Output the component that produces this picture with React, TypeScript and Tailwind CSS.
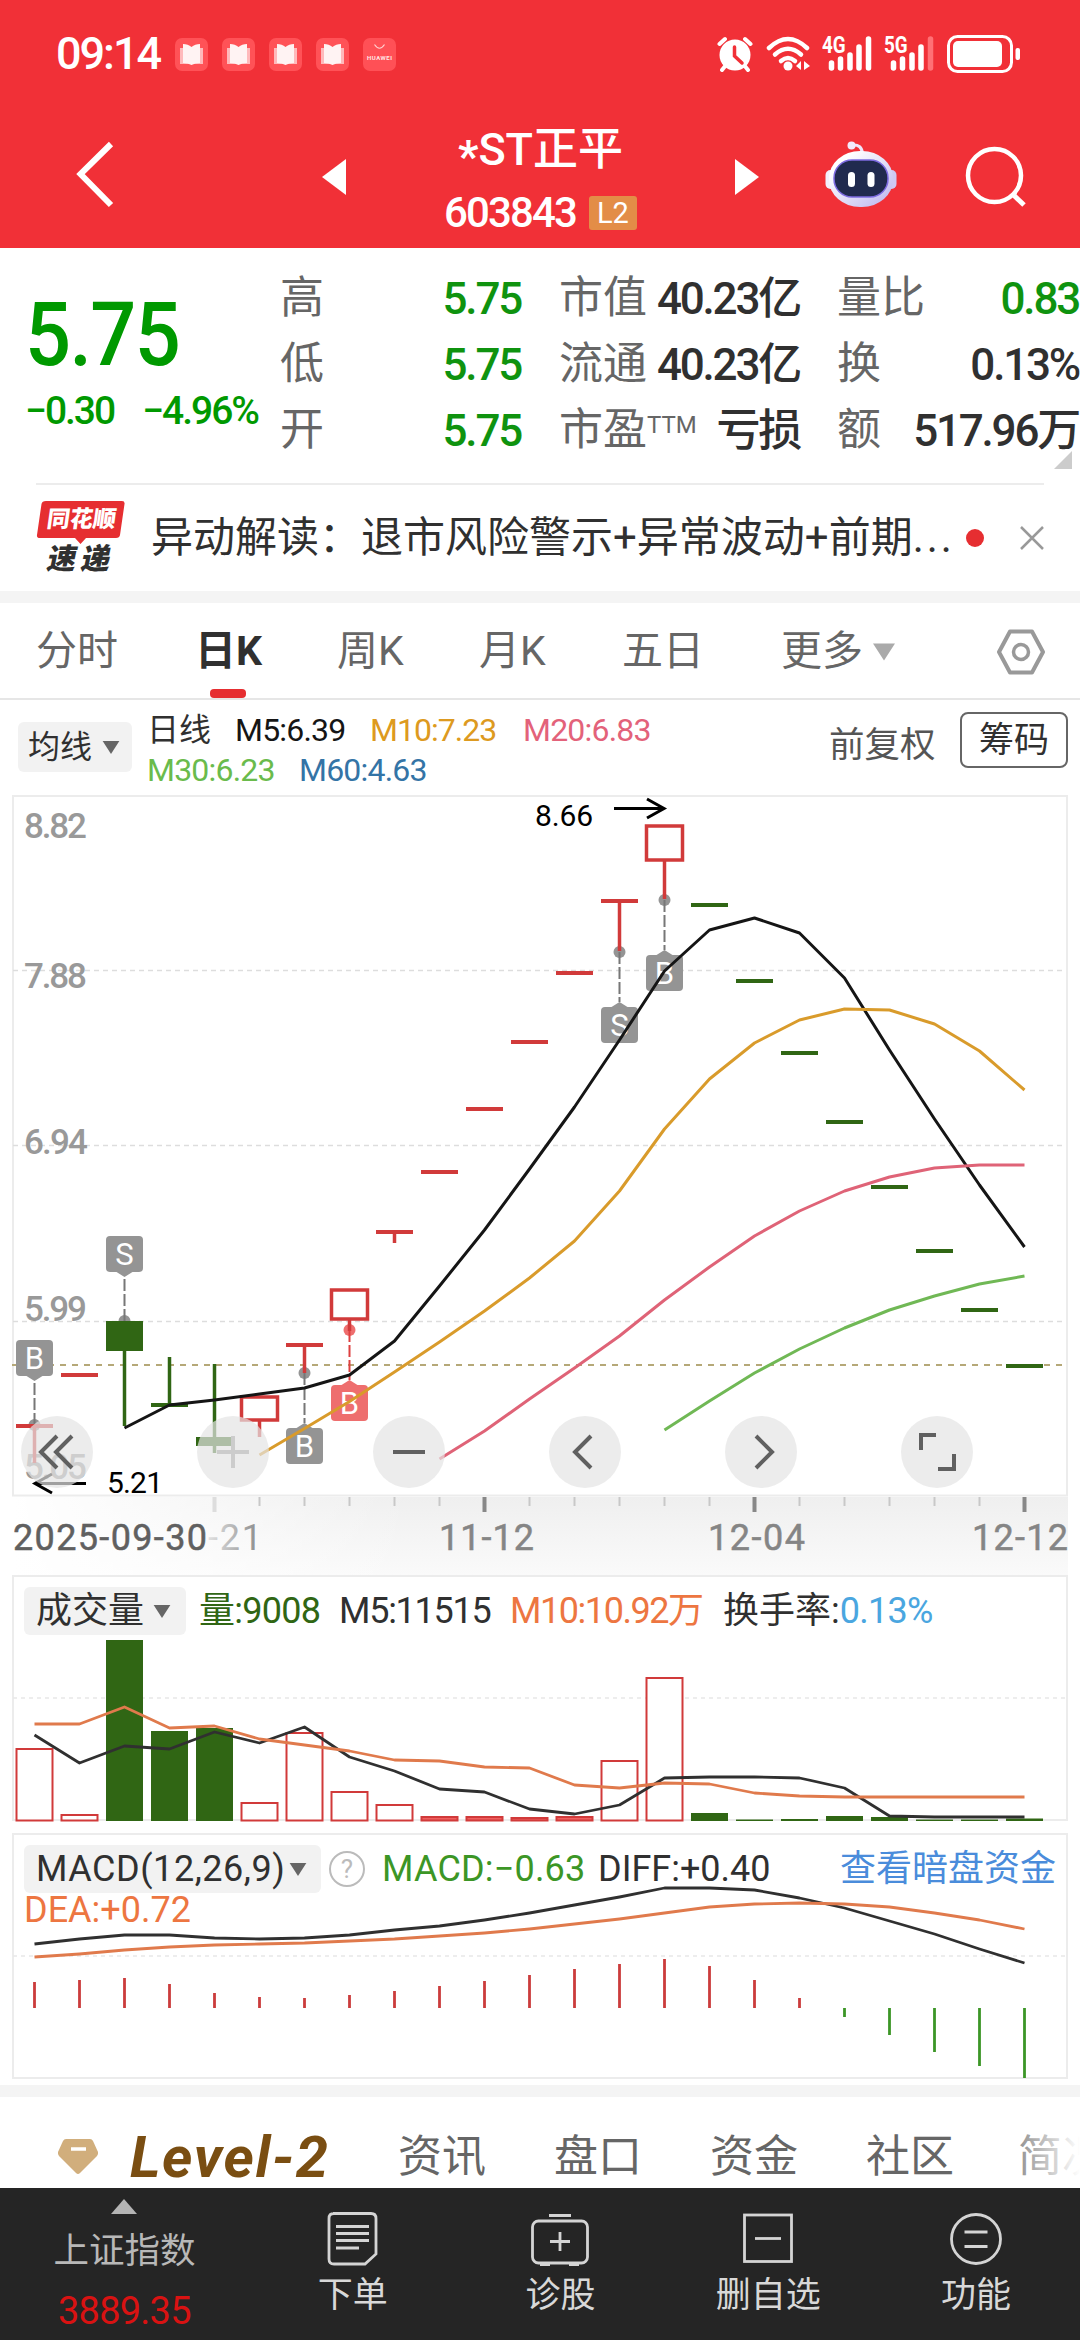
import type { ReactNode } from "react";

const STEP = 45;
const X0 = 34.5;
const cx = (i: number) => X0 + i * STEP;

const toPoints = (ys: number[], start = 0) =>
  ys.map((y, i) => `${cx(i + start)},${y}`).join(" ");

const RED = "#d13a3a";
const GREEN = "#306614";

type Candle = {
  kind: "up" | "down";
  top: number;
  bottom: number;
  wick?: [number, number];
};

// y values are already in chart pixels
const candles: Candle[] = [
  { kind: "up", top: 1425, bottom: 1425, wick: [1425, 1462] },
  { kind: "up", top: 1374, bottom: 1374 },
  { kind: "down", top: 1320, bottom: 1350, wick: [1350, 1425] },
  { kind: "down", top: 1404, bottom: 1404, wick: [1356, 1404] },
  { kind: "down", top: 1436, bottom: 1445, wick: [1363, 1452] },
  { kind: "up", top: 1396, bottom: 1419, wick: [1420, 1436] },
  { kind: "up", top: 1344, bottom: 1344, wick: [1344, 1372] },
  { kind: "up", top: 1289, bottom: 1318, wick: [1318, 1330] },
  { kind: "up", top: 1231, bottom: 1231, wick: [1231, 1242] },
  { kind: "up", top: 1171, bottom: 1171 },
  { kind: "up", top: 1108, bottom: 1108 },
  { kind: "up", top: 1041, bottom: 1041 },
  { kind: "up", top: 972, bottom: 972 },
  { kind: "up", top: 900, bottom: 900, wick: [900, 950] },
  { kind: "up", top: 825, bottom: 859, wick: [859, 898] },
  { kind: "down", top: 904, bottom: 904 },
  { kind: "down", top: 980, bottom: 980 },
  { kind: "down", top: 1052, bottom: 1052 },
  { kind: "down", top: 1121, bottom: 1121 },
  { kind: "down", top: 1186, bottom: 1186 },
  { kind: "down", top: 1250, bottom: 1250 },
  { kind: "down", top: 1309, bottom: 1309 },
  { kind: "down", top: 1365, bottom: 1365 },
];

const ma5 = [1427, 1404, 1399, 1393, 1387, 1374, 1340, 1285, 1229, 1168, 1106, 1039, 970, 929, 917, 932, 977, 1049, 1118, 1184, 1246];
const ma10 = [1454, 1427.5, 1400.5, 1371, 1341, 1310, 1277, 1240, 1190, 1128, 1078, 1042, 1019, 1008, 1009, 1023, 1050, 1089];
const ma20 = [1458, 1430, 1398, 1367, 1335, 1299, 1266, 1235, 1210, 1190, 1176, 1167, 1164, 1164];
const ma30 = [1429, 1400, 1372, 1348, 1327, 1309, 1295, 1283, 1275];

type Mark = { i: number; label: string; dot: number; box: number; color: string };

const marks: Mark[] = [
  { i: 0, label: "B", dot: 1424, box: 1339, color: "#949494" },
  { i: 2, label: "S", dot: 1320, box: 1235, color: "#949494" },
  { i: 6, label: "B", dot: 1372, box: 1427, color: "#949494" },
  { i: 7, label: "B", dot: 1329, box: 1384, color: "#ee6e6e" },
  { i: 13, label: "S", dot: 951, box: 1006, color: "#949494" },
  { i: 14, label: "B", dot: 899, box: 954, color: "#949494" },
];

const volumes = [
  { top: 1748, up: true }, { top: 1814, up: true }, { top: 1639, up: false },
  { top: 1730, up: false }, { top: 1727, up: false }, { top: 1802, up: true },
  { top: 1732, up: true }, { top: 1791, up: true }, { top: 1804, up: true },
  { top: 1816, up: true }, { top: 1816, up: true }, { top: 1817, up: true },
  { top: 1816, up: true }, { top: 1760, up: true }, { top: 1677, up: true },
  { top: 1812, up: false }, { top: 1818.5, up: false }, { top: 1818, up: false },
  { top: 1815, up: false }, { top: 1816, up: false }, { top: 1818.5, up: false },
  { top: 1818.5, up: false }, { top: 1817.5, up: false },
];
const vol5 = [1734, 1762, 1745, 1748, 1731, 1742, 1726, 1756, 1770, 1788, 1791, 1808, 1813, 1804, 1777, 1776, 1776, 1777, 1787, 1815, 1816, 1816, 1816];
const vol10 = [1723, 1723, 1706, 1727, 1725, 1738, 1744, 1750, 1759, 1760, 1766, 1767, 1784, 1787, 1782, 1783, 1792, 1795, 1796, 1796, 1796, 1796, 1796];

const macdBars = [1981, 1979, 1977, 1983, 1992, 1996, 1997, 1994, 1990, 1985, 1980, 1974, 1968, 1963, 1958, 1965, 1979, 1997, 2016, 2034, 2051, 2065, 2077];
const diff = [1943, 1938, 1934, 1934, 1937, 1938, 1937, 1934, 1929, 1925, 1919, 1912, 1904, 1896, 1887, 1887, 1889, 1897, 1907, 1920, 1933, 1948, 1962];
const dea = [1956, 1953, 1949, 1946, 1944, 1943, 1942, 1940, 1938, 1935, 1932, 1928, 1923, 1918, 1912, 1906, 1903, 1902, 1903, 1906, 1912, 1919, 1928];

function Caret({ className = "" }: { className?: string }) {
  return (
    <svg viewBox="0 0 18 14" className={`shrink-0 ${className}`}>
      <path d="M0 0H18L9 14Z" fill="currentColor" />
    </svg>
  );
}

function BookIcon() {
  return (
    <svg viewBox="0 0 33 33" className="h-[33px] w-[33px]">
      <rect width="33" height="33" rx="7" fill="#ff5257" />
      <path d="M5 10H28V26H5Z" fill="#ffb9bb" />
      <path d="M8 6Q13 6 16.500 9Q20 6 25 6V25Q20 25 16.500 27Q13 25 8 25Z" fill="#fff3f3" />
    </svg>
  );
}

function Signal({ label, last }: { label: string; last: string }) {
  return (
    <div className="relative h-[38px] w-[52px]">
      <svg viewBox="0 0 52 38" className="h-[38px] w-[52px]">
        <g stroke="#fff" strokeWidth="5.500" strokeLinecap="round">
          <path d="M9.500 28V33M18.500 24V33M28 20V33M37 12V33" />
          <path d="M46.500 4V33" stroke={last} />
        </g>
      </svg>
      <span className="absolute -top-[2px] left-0 origin-left scale-x-[.82] text-[23px] leading-[26px] font-bold">
        {label}
      </span>
    </div>
  );
}

function StatusBar() {
  return (
    <div className="flex h-[108px] items-center">
      <span className="ml-[56px] w-[119px] text-[45px] font-medium tracking-[-0.045em]">09:14</span>
      <div className="flex gap-[14px]">
        <BookIcon />
        <BookIcon />
        <BookIcon />
        <BookIcon />
        <svg viewBox="0 0 33 33" className="h-[33px] w-[33px]">
          <rect width="33" height="33" rx="7" fill="#ff5056" />
          <path d="M11.500 6.500Q16.500 14 21.500 6.500" fill="none" stroke="#ffd0d0" strokeWidth="1.200" />
          <text x="4" y="21.500" fontSize="6" fontWeight="700" textLength="25" fill="#ffe5e5">HUAWEI</text>
        </svg>
      </div>
      <svg viewBox="0 0 36 36" className="ml-[321px] h-[36px] w-[36px]">
        <circle cx="18" cy="19" r="15.500" fill="#fff" />
        <path d="M2.500 8L8 3M33.500 8L28 3M9 29L5 34M27 29L31 34" stroke="#fff" strokeWidth="4" strokeLinecap="round" />
        <path d="M17.500 11V20L25 27" fill="none" stroke="#f13037" strokeWidth="3.500" strokeLinecap="round" />
      </svg>
      <svg viewBox="0 0 46 38" className="ml-[12px] h-[38px] w-[46px]">
        <g fill="none" stroke="#fff" strokeWidth="4.500" strokeLinecap="round">
          <path d="M4 13Q23 -5 42 13" />
          <path d="M10 19.500Q23 8 36 19.500" />
          <path d="M16 26Q23 20 30 26" />
        </g>
        <circle cx="23" cy="31" r="4.500" fill="#fff" />
        <path d="M36 26V35L31 31ZM39 26L45 31L39 35Z" fill="#fff" />
      </svg>
      <div className="ml-[11px]"><Signal label="4G" last="#fff" /></div>
      <div className="ml-[10px]"><Signal label="5G" last="#ff7075" /></div>
      <svg viewBox="0 0 74 38" className="ml-[11px] h-[38px] w-[74px]">
        <rect x="1.500" y="1.500" width="63" height="35" rx="9" fill="none" stroke="#fff" strokeWidth="3" />
        <rect x="6" y="6" width="49" height="26" rx="5" fill="#fff" />
        <rect x="68.500" y="13" width="4.500" height="12" rx="2" fill="#fff" />
      </svg>
    </div>
  );
}

function Robot() {
  return (
    <svg viewBox="0 0 72 68" className="h-[68px] w-[72px]">
      <defs>
        <linearGradient id="shell" x1="0" y1="0" x2="1" y2="1">
          <stop offset="0.2" stopColor="#ffffff" />
          <stop offset="1" stopColor="#b9b2ee" />
        </linearGradient>
      </defs>
      <path d="M27 5Q37 4 37.500 14" fill="none" stroke="#efe6fa" strokeWidth="3" />
      <circle cx="26.500" cy="5.500" r="4" fill="#f3eafc" />
      <rect x="0.500" y="30" width="10" height="19" rx="5" fill="#f2effc" />
      <rect x="61.500" y="30" width="10" height="19" rx="5" fill="#cfc9f3" />
      <rect x="4" y="11" width="64" height="56" rx="31" ry="27" fill="url(#shell)" />
      <rect x="9" y="20" width="54" height="37" rx="18" fill="#202a4e" stroke="#7c6ae0" strokeWidth="1.500" />
      <rect x="23" y="32" width="7" height="15" rx="3.500" fill="#fff" />
      <rect x="42.500" y="32" width="7" height="15" rx="3.500" fill="#fff" />
    </svg>
  );
}

function TitleBar() {
  return (
    <div className="flex h-[140px] items-start">
      <svg viewBox="0 0 38 68" className="mt-[33px] ml-[76px] h-[68px] w-[38px]">
        <path d="M35 3L4.500 33L35 64" fill="none" stroke="#fff" strokeWidth="6" />
      </svg>
      <svg viewBox="0 0 24 36" className="mt-[51px] ml-[208px] h-[36px] w-[24px]">
        <path d="M24 0V36L0 18Z" fill="#fff" />
      </svg>
      <div className="mt-[14px] flex w-[389px] flex-col items-center">
        <div className="text-[45px] leading-[56px] font-medium whitespace-nowrap">
          <span className="inline-block translate-y-[7px] font-bold">*</span>ST正平
        </div>
        <div className="mt-[5px] flex items-center gap-[13px]">
          <span className="text-[42px] leading-[60px] font-medium tracking-[-0.045em]">603843</span>
          <span className="flex h-[34px] w-[48px] items-center justify-center rounded-[3px] bg-[#e38d47] text-[29px] leading-none">
            L2
          </span>
        </div>
      </div>
      <svg viewBox="0 0 24 36" className="mt-[51px] h-[36px] w-[24px]">
        <path d="M0 0V36L24 18Z" fill="#fff" />
      </svg>
      <div className="mt-[32px] ml-[66px]">
        <Robot />
      </div>
      <svg viewBox="0 0 64 64" className="mt-[38px] ml-[67px] h-[64px] w-[64px]">
        <circle cx="30.500" cy="29.500" r="26.500" fill="none" stroke="#fff" strokeWidth="4.500" />
        <path d="M49 48.500L60 59" stroke="#fff" strokeWidth="5" />
      </svg>
    </div>
  );
}

function Stat({ label, sup, value, green }: { label: string; sup?: string; value: string; green?: boolean }) {
  return (
    <div className="flex h-[66px] items-center justify-between">
      <span className="flex text-[44px] leading-none text-[#666]">
        {label}
        {sup && <sup className="top-0 pt-[5px] text-[24px] leading-none">{sup}</sup>}
      </span>
      <span className={`pt-[2px] text-[44px] leading-none font-medium tracking-[-0.05em] ${green ? "text-[#0f930f]" : "text-[#303030]"}`}>
        {value}
      </span>
    </div>
  );
}

function Quote() {
  return (
    <div className="relative flex h-[235px] pt-[17px]">
      <div className="w-[280px] shrink-0 pl-[25px] font-medium text-[#009900]">
        <div className="origin-left scale-x-[.91] pt-[18px] text-[89px] leading-[104px] tracking-[-0.02em]">5.75</div>
        <div className="flex gap-[28px] text-[39px] leading-[48px] tracking-[-0.052em]">
          <span>−0.30</span>
          <span>−4.96%</span>
        </div>
      </div>
      <div className="w-[241px] shrink-0">
        <Stat label="高" value="5.75" green />
        <Stat label="低" value="5.75" green />
        <Stat label="开" value="5.75" green />
      </div>
      <div className="ml-[38px] w-[241px] shrink-0">
        <Stat label="市值" value="40.23亿" />
        <Stat label="流通" value="40.23亿" />
        <Stat label="市盈" sup="TTM" value="亏损" />
      </div>
      <div className="ml-[37px] w-[242px] shrink-0">
        <Stat label="量比" value="0.83" green />
        <Stat label="换" value="0.13%" />
        <Stat label="额" value="517.96万" />
      </div>
      <svg viewBox="0 0 18 18" className="absolute right-[8px] bottom-[14px] h-[18px] w-[18px]">
        <path d="M18 0V18H0Z" fill="#ccc" />
      </svg>
    </div>
  );
}

function NewsBar() {
  return (
    <div className="mr-[36px] ml-[36px] flex h-[108px] items-center border-t-2 border-[#ececec]">
      <div className="relative h-[76px] w-[90px] shrink-0 leading-none font-black whitespace-nowrap">
        <svg viewBox="0 0 90 46" className="h-[46px] w-[90px]">
          <path d="M10 1H86Q89 1 88.500 4L84 35Q83.500 38 80 38H50L44.500 44L39 38H4Q0.500 38 1 35L5.500 4Q6 1 10 1Z" fill="#e62e31" />
        </svg>
        <span className="absolute top-[8px] left-[11px] -skew-x-8 text-[23px] leading-[24px] text-white">同花顺</span>
        <span className="absolute top-[44px] left-[12px] -skew-x-12 text-[29px] leading-[30px] tracking-[5px] text-[#303030]">速递</span>
      </div>
      <span className="ml-[25px] w-[802px] shrink-0 text-[42px] leading-[60px] whitespace-nowrap text-[#303030]">
        异动解读：退市风险警示+异常波动+前期<span className="tracking-[3px]">...</span>
      </span>
      <span className="ml-[13px] h-[18px] w-[18px] rounded-full bg-[#e62e31]" />
      <svg viewBox="0 0 24 24" className="ml-auto h-[24px] w-[24px]">
        <path d="M1 1L23 23M23 1L1 23" stroke="#999" strokeWidth="2.500" />
      </svg>
    </div>
  );
}

function PeriodTabs() {
  return (
    <div className="flex h-[97px] items-center border-b-2 border-[#e6e6e6] pt-[2px] text-[41px] leading-none text-[#666]">
      <span className="ml-[36px] w-[159px]">分时</span>
      <span className="relative flex h-full w-[142px] items-center font-bold text-[#303030]">
        日K
        <span className="absolute bottom-0 left-[15px] h-[9px] w-[36px] rounded-[4px] bg-[#e62e31]" />
      </span>
      <span className="w-[142px]">周K</span>
      <span className="w-[143px]">月K</span>
      <span className="w-[159px]">五日</span>
      <span>更多</span>
      <Caret className="ml-[10px] h-[18px] w-[22px] text-[#aaa]" />
      <svg viewBox="0 0 50 46" className="ml-[101px] h-[46px] w-[50px]">
        <path d="M14 2.500H36L47 23L36 43.500H14L3 23Z" fill="none" stroke="#999" strokeWidth="4" strokeLinejoin="round" />
        <circle cx="25" cy="23" r="7.500" fill="none" stroke="#999" strokeWidth="3.500" />
      </svg>
    </div>
  );
}

function MaRow() {
  return (
    <div className="flex h-[92px]">
      <div className="mt-[22px] ml-[18px] flex h-[50px] w-[114px] items-center rounded-[6px] bg-[#f2f2f2] pl-[10px] text-[32px] leading-none text-[#303030]">
        均线
        <Caret className="ml-[10px] h-[13px] w-[18px] text-[#666]" />
      </div>
      <div className="ml-[15px] w-[682px] pt-[10px] text-[32px] leading-[40px]">
        <div className="flex h-[40px] items-center">
          <span className="w-[88px] text-[#303030]">日线</span>
          <span className="w-[135px] tracking-[-0.025em] text-[#151515]">M5:6.39</span>
          <span className="w-[153px] tracking-[-0.03em] text-[#dd9a20]">M10:7.23</span>
          <span className="tracking-[-0.025em] text-[#e3627a]">M20:6.83</span>
        </div>
        <div className="flex h-[40px] items-center tracking-[-0.025em]">
          <span className="w-[152px] text-[#6abb4c]">M30:6.23</span>
          <span className="text-[#3474a6]">M60:4.63</span>
        </div>
      </div>
      <span className="mt-[25px] w-[131px] text-[35.500px] leading-[40px] text-[#555]">前复权</span>
      <span className="mt-[12px] flex h-[56px] w-[108px] items-center justify-center rounded-[8px] border-2 border-[#666] text-[35px] leading-none text-[#303030]">
        筹码
      </span>
    </div>
  );
}

function RoundButton({ x, children, faded }: { x: number; children: ReactNode; faded?: boolean }) {
  return (
    <g transform={`translate(${x} 1451)`}>
      <circle r="36" fill="#e4e4e4" fillOpacity="0.7" />
      <g fill="none" stroke={faded ? "#ccc" : "#606060"} strokeWidth="4">
        {children}
      </g>
    </g>
  );
}

function Marker({ i, label, dot, box, color }: Mark) {
  const x = cx(i);
  const above = box < dot;
  const tip = above ? box + 41 : box - 5;
  const base = above ? box + 36 : box;
  return (
    <g>
      <circle cx={x} cy={dot} r="6" fill={color} />
      <path d={`M${x} ${dot}V${tip}`} stroke={color === "#949494" ? "#777" : "#dd4040"} strokeWidth="2" strokeDasharray="12 3" />
      <path d={`M${x - 8} ${base}L${x} ${tip}L${x + 8} ${base}Z`} fill={color} />
      <rect x={x - 18.5} y={box} width="37" height="36" rx="4" fill={color} />
      <text x={x} y={box + 29} fontSize="31" textAnchor="middle" fill="#fff">{label}</text>
    </g>
  );
}

function PriceChart() {
  return (
    <svg viewBox="0 791 1080 783" className="block h-[783px] w-[1080px]">
      <defs>
        <linearGradient id="axis" x1="0" y1="0" x2="0" y2="1">
          <stop offset="0" stopColor="#efefef" />
          <stop offset="1" stopColor="#fafafa" />
        </linearGradient>
        <linearGradient id="axisFade" x1="0" y1="0" x2="1" y2="0">
          <stop offset="0" stopColor="#fff" />
          <stop offset="1" stopColor="#fff" stopOpacity="0" />
        </linearGradient>
        <linearGradient id="dateFade" gradientUnits="userSpaceOnUse" x1="205" y1="0" x2="262" y2="0">
          <stop offset="0" stopColor="#e6e6e6" />
          <stop offset="1" stopColor="#888" />
        </linearGradient>
      </defs>

      <rect x="13" y="1496" width="1055" height="78" fill="url(#axis)" />
      <rect x="13" y="1496" width="400" height="78" fill="url(#axisFade)" />
      <rect x="13" y="795" width="1054" height="699.500" fill="none" stroke="#ececec" strokeWidth="2" />

      <g stroke="#ddd" strokeWidth="1.500" strokeDasharray="5 4">
        <path d="M13 969.500H1066M13 1144.500H1066M13 1320.500H1066" />
      </g>
      <path d="M12 1364H1066" stroke="#b5a878" strokeWidth="2" strokeDasharray="6 6" />

      <g fontSize="35" fontWeight="500" fill="#999">
        <text x="24" y="837" textLength="63">8.82</text>
        <text x="24" y="987" textLength="63">7.88</text>
        <text x="24" y="1153" textLength="64">6.94</text>
        <text x="24" y="1320" textLength="63">5.99</text>
        <text x="24" y="1478" textLength="63">5.05</text>
      </g>

      {marks.map((m) => (
        <Marker key={m.i} {...m} />
      ))}

      {candles.map((c, i) => {
        const color = c.kind === "up" ? RED : GREEN;
        const x = cx(i);
        return (
          <g key={i} stroke={color} strokeWidth="3.500">
            {c.wick && <path d={`M${x} ${c.wick[0]}V${c.wick[1]}`} />}
            {c.top === c.bottom ? (
              <path d={`M${x - 18.5} ${c.top}H${x + 18.5}`} strokeWidth="4" />
            ) : c.kind === "up" ? (
              <rect x={x - 18} y={c.top} width="36" height={c.bottom - c.top} fill="#fff" />
            ) : (
              <rect x={x - 18.5} y={c.top} width="37" height={c.bottom - c.top} fill={color} stroke="none" />
            )}
          </g>
        );
      })}

      <g fill="none" strokeWidth="3" strokeLinejoin="round">
        <polyline points={toPoints(ma5, 2)} stroke="#151515" />
        <polyline points={toPoints(ma10, 5)} stroke="#d99b2b" />
        <polyline points={toPoints(ma20, 9)} stroke="#df6377" />
        <polyline points={toPoints(ma30, 14)} stroke="#70b855" />
      </g>

      <g fontSize="30" fill="#000">
        <text x="535" y="825" textLength="58">8.66</text>
        <text x="107" y="1492" textLength="56">5.21</text>
      </g>
      <g fill="none" stroke="#000" strokeWidth="3">
        <path d="M614 807.500H664M647 798L664 807.500L647 817" />
        <path d="M86 1482.500H36M52 1473L35 1482.500L52 1492" />
      </g>

      <RoundButton x={57}><path d="M0 -16L-16 0L0 16M15 -16L-1 0L15 16" /></RoundButton>
      <RoundButton x={233} faded><path d="M-16 0H16M0 -16V16" /></RoundButton>
      <RoundButton x={409}><path d="M-16 0H16" /></RoundButton>
      <RoundButton x={585}><path d="M6 -16L-10 0L6 16" /></RoundButton>
      <RoundButton x={761}><path d="M-5 -16L11 0L-5 16" /></RoundButton>
      <RoundButton x={937}><path d="M-1 -17H-16V-2M1 17H17V2" /></RoundButton>

      {Array.from({ length: 19 }, (_, k) => k + 4).map((i) => {
        const major = (i - 4) % 6 === 0;
        return (
          <path
            key={i}
            d={`M${cx(i)} 1496V${major ? 1511 : 1505}`}
            stroke={i === 4 ? "#ddd" : major ? "#888" : "#c8c8c8"}
            strokeWidth={major ? 4 : 2}
          />
        );
      })}
      <g fontSize="36" fill="#858585" stroke="#858585" strokeWidth="0.500">
        <text x="13" y="1549" textLength="194" fill="#606060" stroke="#606060">2025-09-30</text>
        <text x="208" y="1549" textLength="54" fill="url(#dateFade)" stroke="none">-21</text>
        <text x="439" y="1549" textLength="95">11-12</text>
        <text x="708" y="1549" textLength="97">12-04</text>
        <text x="972" y="1549" textLength="96">12-12</text>
      </g>
    </svg>
  );
}

function VolumeChart() {
  return (
    <div className="relative h-[257px]">
      <svg viewBox="0 1574 1080 257" className="block h-[257px] w-[1080px]">
        <rect x="13" y="1575" width="1054" height="244" fill="none" stroke="#ececec" strokeWidth="2" />
        <path d="M13 1697H1066" stroke="#e8e8e8" strokeWidth="1.500" strokeDasharray="4 4" />
        {volumes.map((v, i) =>
          v.up ? (
            <rect key={i} x={cx(i) - 18} y={v.top} width="36" height={1819.5 - v.top} fill={v.top > 1815 ? "#f06060" : "#fff"} stroke={RED} strokeWidth="2" />
          ) : (
            <rect key={i} x={cx(i) - 18.5} y={v.top} width="37" height={1820 - v.top} fill={GREEN} />
          ),
        )}
        <g fill="none" strokeWidth="2.800" strokeLinejoin="round">
          <polyline points={toPoints(vol5)} stroke="#303030" />
          <polyline points={toPoints(vol10)} stroke="#e07a4c" />
        </g>
      </svg>
      <div className="absolute top-[12px] left-[24px] flex h-[48px] items-center text-[36px] leading-none whitespace-nowrap text-[#303030]">
        <span className="flex h-full w-[162px] items-center rounded-[6px] bg-[#f2f2f2] pl-[12px]">
          成交量
          <Caret className="ml-[9px] h-[13px] w-[18px] text-[#666]" />
        </span>
        <span className="ml-[13px] w-[140px] tracking-[-0.02em] text-[#306614]">量:9008</span>
        <span className="w-[171px] tracking-[-0.035em]">M5:11515</span>
        <span className="w-[213px] tracking-[-0.04em] text-[#ed7641]">M10:10.92万</span>
        <span>换手率:</span>
        <span className="tracking-[-0.02em] text-[#4aa6e0]">0.13%</span>
      </div>
    </div>
  );
}

function MacdChart() {
  return (
    <div className="relative h-[253px]">
      <svg viewBox="0 1831 1080 253" className="block h-[253px] w-[1080px]">
        <rect x="13" y="1833" width="1054" height="244" fill="none" stroke="#ececec" strokeWidth="2" />
        <path d="M13 1955H1066" stroke="#e8e8e8" strokeWidth="1.500" strokeDasharray="4 4" />
        {macdBars.map((y, i) => (
          <path key={i} d={`M${cx(i)} 2007V${y}`} stroke={y < 2007 ? "#cb3c3c" : "#3c9626"} strokeWidth="2.800" />
        ))}
        <g fill="none" strokeWidth="2.800" strokeLinejoin="round">
          <polyline points={toPoints(diff)} stroke="#303030" />
          <polyline points={toPoints(dea)} stroke="#e07a4c" />
        </g>
      </svg>
      <div className="absolute top-[13px] left-[24px] w-[1044px] text-[36px] leading-none whitespace-nowrap text-[#303030]">
        <div className="flex h-[48px] items-center">
          <span className="flex h-full w-[297px] items-center rounded-[6px] bg-[#f2f2f2] pl-[12px] tracking-[0.015em]">
            MACD(12,26,9)
            <Caret className="mr-[14px] ml-auto h-[13px] w-[18px] text-[#666]" />
          </span>
          <span className="ml-[8px] flex h-[36px] w-[36px] items-center justify-center rounded-full border-2 border-[#bbb] text-[26px] text-[#bbb]">
            ?
          </span>
          <span className="ml-[17px] w-[216px] tracking-[0.005em] text-[#3c9626]">MACD:−0.63</span>
          <span>DIFF:+0.40</span>
          <span className="mr-[12px] ml-auto text-[#4a8cdb]">查看暗盘资金</span>
        </div>
        <div className="leading-[34px] text-[#ed7641]">DEA:+0.72</div>
      </div>
    </div>
  );
}

function InfoTabs() {
  return (
    <div className="relative flex h-[91px] items-center overflow-hidden pt-[28px] text-[44px] leading-none whitespace-nowrap text-[#666]">
      <svg viewBox="0 0 42 38" className="ml-[57px] h-[38px] w-[42px] shrink-0">
        <path d="M9 1H33Q35 1 36 3L41 14Q41.500 16 40 18L23 35Q21 37 19 35L2 18Q0.500 16 1 14L6 3Q7 1 9 1Z" fill="#d1ae7c" />
        <path d="M14 11H29" stroke="#fff" strokeWidth="3.500" />
      </svg>
      <span className="ml-[31px] w-[268px] shrink-0 text-[58px] font-bold text-[#7a4e12] italic tracking-[0.028em]">Level-2</span>
      <span className="w-[156px] shrink-0">资讯</span>
      <span className="w-[156px] shrink-0">盘口</span>
      <span className="w-[156px] shrink-0">资金</span>
      <span className="w-[152px] shrink-0">社区</span>
      <span className="shrink-0">简况</span>
      <div className="absolute top-0 right-0 h-full w-[70px] bg-linear-to-r from-white/20 to-white" />
    </div>
  );
}

function NavItem({ label, children }: { label: string; children: ReactNode }) {
  return (
    <div className="flex w-[208px] flex-col items-center pt-[22px]">
      <svg viewBox="0 0 60 56" className="h-[56px] w-[60px]" fill="none" stroke="#d4d4d4" strokeWidth="2.800">
        {children}
      </svg>
      <span className="mt-[10px] text-[35px] leading-[40px] text-[#d8d8d8]">{label}</span>
    </div>
  );
}

function BottomNav() {
  return (
    <div className="flex h-[153px] bg-[#252525]">
      <div className="flex w-[249px] flex-col items-center pt-[11px]">
        <svg viewBox="0 0 26 15" className="h-[15px] w-[26px]">
          <path d="M13 0L26 15H0Z" fill="#b4b4b4" />
        </svg>
        <span className="mt-[17px] text-[35.500px] leading-[40px] text-[#b8b8b8]">上证指数</span>
        <span className="mt-[16px] text-[38px] leading-[48px] tracking-[-0.02em] text-[#d91212]">3889.35</span>
      </div>
      <NavItem label="下单">
        <path d="M10 3.500H48Q53 3.500 53 8.500V44L42 54H11Q6 54 6 49V8.500Q6 3.500 11 3.500Z" />
        <path d="M13 16.500H46M13 23.500H46M13 30.500H46M13 38H36" />
      </NavItem>
      <NavItem label="诊股">
        <rect x="2.500" y="11" width="55" height="42" rx="6" />
        <path d="M19 5.500H41M30 22V41M20 31.500H40" />
        <path d="M10 54.500H20M39 54.500H49" strokeWidth="3.500" />
      </NavItem>
      <NavItem label="删自选">
        <rect x="6.500" y="5" width="47" height="46.500" />
        <path d="M17 28.500H43" />
      </NavItem>
      <NavItem label="功能">
        <circle cx="30" cy="29" r="24.500" />
        <path d="M18.500 22H41.500M18.500 36.500H41.500" />
      </NavItem>
    </div>
  );
}

export default function App() {
  return (
    <div className="h-[2340px] w-[1080px] overflow-hidden bg-white font-[Roboto,'Noto_Sans_CJK_SC',sans-serif]">
      <header className="h-[248px] bg-[#f13037] text-white">
        <StatusBar />
        <TitleBar />
      </header>
      <Quote />
      <NewsBar />
      <div className="h-[12px] bg-[#f4f4f4]" />
      <PeriodTabs />
      <MaRow />
      <PriceChart />
      <VolumeChart />
      <MacdChart />
      <div className="h-[12px] bg-[#f4f4f4]" />
      <InfoTabs />
      <BottomNav />
    </div>
  );
}
